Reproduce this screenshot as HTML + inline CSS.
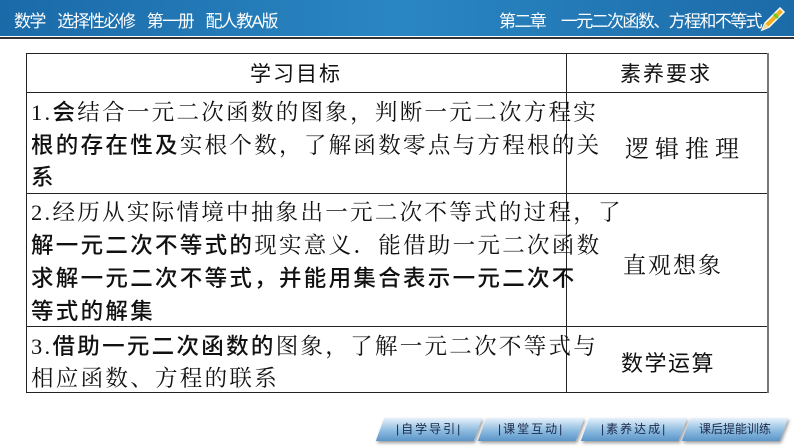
<!DOCTYPE html>
<html><head><meta charset="utf-8"><style>
*{margin:0;padding:0;box-sizing:border-box}
body{width:794px;height:447px;overflow:hidden;background:#fff;position:relative;font-family:"Liberation Serif","Noto Serif CJK SC",serif;color:#111}
.hdr{position:absolute;left:0;top:0;width:794px;height:36px;background:linear-gradient(90deg,#1a6aa8,#2a86c2 50%,#1b6ba8);color:#fff;font-family:"Liberation Sans","Noto Sans CJK SC",sans-serif;font-size:17px;letter-spacing:-1.6px}
.hl{position:absolute;top:37px;left:0;width:794px;height:2px;background:#333}
.t{position:absolute;white-space:nowrap}
.ln{position:absolute;background:#222}
.l{position:absolute;left:31px;font-size:22.5px;letter-spacing:2.3px;white-space:nowrap;line-height:33px}
.s{font-family:"Liberation Sans","Noto Sans CJK SC",sans-serif;font-weight:500}
.r{position:absolute;font-family:"Liberation Sans","Noto Sans CJK SC",sans-serif;font-size:21px;letter-spacing:2px;white-space:nowrap}
.btn{position:absolute;top:418px;height:23px;width:98px;transform:skewX(-20deg);background:linear-gradient(#e6f1fa,#8dbbe0 55%,#5b95c8);box-shadow:2px 2px 3px #999;font-family:"Liberation Sans","Noto Sans CJK SC",sans-serif;font-size:12px;color:#1a2a4a;text-align:center;line-height:23px}
.btn span{display:inline-block;transform:skewX(20deg);letter-spacing:2px}
</style></head><body>
<div class="hdr">
<div class="t" style="left:14px;top:7px">数学&nbsp;&nbsp;&nbsp;&nbsp;选择性必修&nbsp;&nbsp;&nbsp;&nbsp;第一册&nbsp;&nbsp;&nbsp;&nbsp;配人教A版</div>
<div class="t" style="left:499px;top:7px">第二章&nbsp;&nbsp;&nbsp;&nbsp;&nbsp;一元二次函数、方程和不等式</div>
<svg style="position:absolute;left:758px;top:3px" width="30" height="30" viewBox="0 0 30 30"><path d="M4 27 L7 20 L22 5 L26 9 L11 24 Z" fill="#f0b020" stroke="#fff" stroke-width="1.5"/><path d="M7 20 L11 24 L4 27Z" fill="#f3d9a0"/><path d="M16 11 L20 15" stroke="#6c3" stroke-width="3"/></svg>
</div>
<div class="hl"></div>
<div class="ln" style="left:26px;top:53px;width:742px;height:1px"></div>
<div class="ln" style="left:26px;top:92px;width:742px;height:1px"></div>
<div class="ln" style="left:26px;top:193px;width:742px;height:1px"></div>
<div class="ln" style="left:26px;top:326px;width:742px;height:1px"></div>
<div class="ln" style="left:26px;top:392px;width:742px;height:1px"></div>
<div class="ln" style="left:26px;top:53px;width:1px;height:340px"></div>
<div class="ln" style="left:566px;top:53px;width:1px;height:340px"></div>
<div class="ln" style="left:767px;top:53px;width:1.5px;height:340px;background:#777"></div>
<div class="r" style="left:250px;top:58px">学习目标</div>
<div class="r" style="left:620px;top:58px">素养要求</div>
<div class="l" style="top:96px">1.<span class="s">会</span>结合一元二次函数的图象，判断一元二次方程实</div>
<div class="l s" style="top:129px;left:31px">根的存在性及<span style="font-family:'Liberation Serif','Noto Serif CJK SC',serif;font-weight:400">实根个数，了解函数零点与方程根的关</span></div>
<div class="l s" style="top:161px;left:31px">系</div>
<div class="l" style="top:196px">2.经历从实际情境中抽象出一元二次不等式的过程，了</div>
<div class="l" style="top:229px"><span class="s">解一元二次不等式的</span>现实意义．能借助一元二次函数</div>
<div class="l s" style="top:262px">求解一元二次不等式，并能用集合表示一元二次不</div>
<div class="l s" style="top:295px">等式的解集</div>
<div class="l" style="top:330px">3.<span class="s">借助一元二次函数的</span>图象，了解一元二次不等式与</div>
<div class="l" style="top:362px">相应函数、方程的联系</div>
<div class="r" style="left:625px;top:129px;font-family:'Liberation Serif','Noto Serif CJK SC',serif;font-size:24px;letter-spacing:6px">逻辑推理</div>
<div class="r" style="left:623px;top:247px;font-family:'Liberation Serif','Noto Serif CJK SC',serif;font-size:23px;letter-spacing:2px">直观想象</div>
<div class="r" style="left:621px;top:346px;font-size:22px;letter-spacing:1.5px">数学运算</div>
<div class="btn" style="left:380px"><span>|自学导引|</span></div>
<div class="btn" style="left:482px"><span>|课堂互动|</span></div>
<div class="btn" style="left:585px"><span>|素养达成|</span></div>
<div class="btn" style="left:686px"><span style="letter-spacing:0">课后提能训练</span></div>
</body></html>
